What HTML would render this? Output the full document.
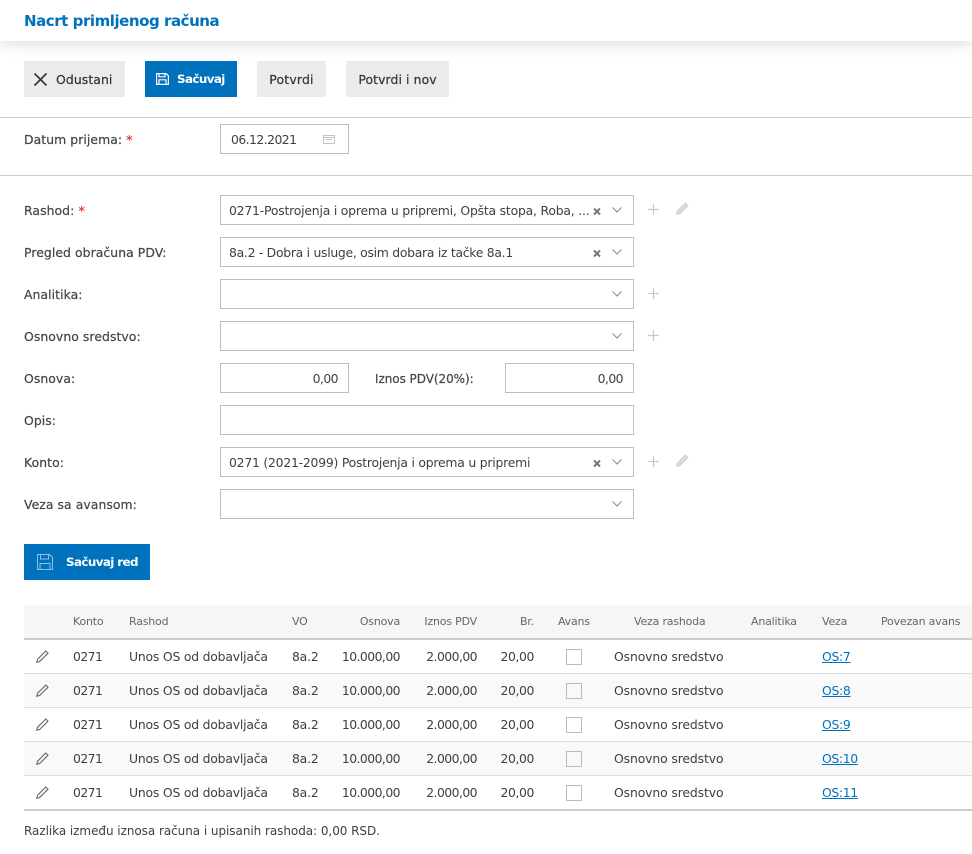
<!DOCTYPE html>
<html><head><meta charset="utf-8">
<style>
html,body{margin:0;padding:0;background:#fff}
body{position:relative;width:972px;height:854px;overflow:hidden;font-family:"DejaVu Sans","Liberation Sans",sans-serif;font-size:12.4px;color:#444}
.a{position:absolute}
.t{position:absolute;white-space:nowrap;line-height:18px;color:#3f3f3f;margin-top:1px}
.l{color:#444;letter-spacing:.07px;-webkit-text-stroke:.2px #444}
.h{font-size:11px;color:#666;margin-top:0;letter-spacing:-.2px}
.r{text-align:right}
.n{letter-spacing:-.55px}
.u{letter-spacing:-.2px}
.o{letter-spacing:-.12px}
.i{position:absolute;box-sizing:border-box;border:1px solid #bdbdbd;background:#fff;height:30px}
.b{position:absolute;height:36px;background:#ebebeb;line-height:37px;color:#333;text-align:center;font-size:12.4px;-webkit-text-stroke:.2px #333}
.p{background:#0071bc;color:#fff;font-weight:bold;font-size:11.9px;-webkit-text-stroke:0;letter-spacing:-.6px}
.s{color:#e8413c;font-weight:bold;-webkit-text-stroke:0}
svg{position:absolute;overflow:visible}
a{color:#0071bc}
</style></head><body>
<div class="a" style="left:0;top:0;width:972px;height:41px;background:#fff;box-shadow:0 4px 14px rgba(0,0,0,.12)"></div>
<div class="t" style="left:24px;top:11px;margin-top:0;font-size:15px;font-weight:bold;color:#0071bc;line-height:20px;letter-spacing:-.45px">Nacrt primljenog računa</div>

<div class="b" style="left:24px;top:61px;width:101px"><span class="a" style="left:32px;top:0;letter-spacing:.1px">Odustani</span></div>
<svg style="left:34px;top:73px" width="13" height="13" viewBox="0 0 13 13"><path d="M.5.500l12 12M12.500.500l-12 12" stroke="#333" stroke-width="1.600" fill="none"/></svg>
<div class="b p" style="left:145px;top:61px;width:92px"><span class="a" style="left:32px;top:0">Sačuvaj</span></div>
<svg style="left:156px;top:73px" width="13" height="12" viewBox="0 0 13 12"><path d="M.6.600h9.500l2.300 2.200v8.600H.6zM3 .8v3h6v-3M3 11V6.800h7V11" stroke="#fff" stroke-width="1.200" fill="none"/></svg>
<div class="b" style="left:257px;top:61px;width:69px;letter-spacing:.2px">Potvrdi</div>
<div class="b" style="left:346px;top:61px;width:103px;letter-spacing:.1px">Potvrdi i nov</div>

<div class="a" style="left:0;top:117px;width:972px;height:1px;background:#ccc"></div>
<div class="t l" style="left:24px;top:130px">Datum prijema: <span class="s">*</span></div>
<div class="i" style="left:220px;top:124px;width:129px"></div>
<div class="t n" style="left:231px;top:130px">06.12.2021</div>
<svg style="left:323px;top:134px" width="12" height="10" viewBox="0 0 12 10"><path d="M.5 1.500h11v8H.5zM.5 3.500h11M3 5.500h6" stroke="#c4c4c4" stroke-width="1" fill="none"/></svg>
<div class="a" style="left:0;top:175px;width:972px;height:1px;background:#ccc"></div>

<div class="t l" style="left:24px;top:201px">Rashod: <span class="s">*</span></div>
<div class="i" style="left:220px;top:195px;width:414px"></div>
<div class="t" style="left:229px;top:201px;width:362px;overflow:hidden;letter-spacing:-.2px">0271-Postrojenja i oprema u pripremi, Opšta stopa, Roba, ...</div>
<svg style="left:593px;top:207px" width="8" height="9" viewBox="0 0 8 9"><path d="M1 1.500l6 6M7 1.500l-6 6" stroke="#777" stroke-width="2" fill="none"/></svg>
<svg style="left:612px;top:207px" width="10" height="6" viewBox="0 0 10 6"><path d="M.5.500L5 5 9.500.500" stroke="#888" stroke-width="1" fill="none"/></svg>
<svg style="left:648px;top:204px" width="11" height="11" viewBox="0 0 11 11"><path d="M5.500 0v11M0 5.500h11" stroke="#c8c8c8" stroke-width="1.200" fill="none"/></svg>
<svg style="left:675px;top:201px" width="15" height="15" viewBox="0 0 15 15"><path d="M1.500 13.500l1-3.500 8-8 2.500 2.500-8 8z" stroke="#d0d0d0" stroke-width="1" fill="#dcdcdc"/></svg>

<div class="t l" style="left:24px;top:243px">Pregled obračuna PDV:</div>
<div class="i" style="left:220px;top:237px;width:414px"></div>
<div class="t" style="left:229px;top:243px;letter-spacing:-.28px">8a.2 - Dobra i usluge, osim dobara iz tačke 8a.1</div>
<svg style="left:593px;top:249px" width="8" height="9" viewBox="0 0 8 9"><path d="M1 1.500l6 6M7 1.500l-6 6" stroke="#777" stroke-width="2" fill="none"/></svg>
<svg style="left:612px;top:249px" width="10" height="6" viewBox="0 0 10 6"><path d="M.5.500L5 5 9.500.500" stroke="#888" stroke-width="1" fill="none"/></svg>

<div class="t l" style="left:24px;top:285px">Analitika:</div>
<div class="i" style="left:220px;top:279px;width:414px"></div>
<svg style="left:612px;top:291px" width="10" height="6" viewBox="0 0 10 6"><path d="M.5.500L5 5 9.500.500" stroke="#888" stroke-width="1" fill="none"/></svg>
<svg style="left:648px;top:288px" width="11" height="11" viewBox="0 0 11 11"><path d="M5.500 0v11M0 5.500h11" stroke="#c8c8c8" stroke-width="1.200" fill="none"/></svg>

<div class="t l" style="left:24px;top:327px">Osnovno sredstvo:</div>
<div class="i" style="left:220px;top:321px;width:414px"></div>
<svg style="left:612px;top:333px" width="10" height="6" viewBox="0 0 10 6"><path d="M.5.500L5 5 9.500.500" stroke="#888" stroke-width="1" fill="none"/></svg>
<svg style="left:648px;top:330px" width="11" height="11" viewBox="0 0 11 11"><path d="M5.500 0v11M0 5.500h11" stroke="#c8c8c8" stroke-width="1.200" fill="none"/></svg>

<div class="t l" style="left:24px;top:369px">Osnova:</div>
<div class="i" style="left:220px;top:363px;width:129px"></div>
<div class="t r n" style="left:220px;top:369px;width:118px">0,00</div>
<div class="t l" style="left:375px;top:369px;font-size:12px;letter-spacing:-.05px">Iznos PDV(20%):</div>
<div class="i" style="left:505px;top:363px;width:129px"></div>
<div class="t r n" style="left:505px;top:369px;width:118px">0,00</div>

<div class="t l" style="left:24px;top:411px">Opis:</div>
<div class="i" style="left:220px;top:405px;width:414px"></div>

<div class="t l" style="left:24px;top:453px">Konto:</div>
<div class="i" style="left:220px;top:447px;width:414px"></div>
<div class="t" style="left:229px;top:453px;letter-spacing:-.22px">0271 (2021-2099) Postrojenja i oprema u pripremi</div>
<svg style="left:593px;top:459px" width="8" height="9" viewBox="0 0 8 9"><path d="M1 1.500l6 6M7 1.500l-6 6" stroke="#777" stroke-width="2" fill="none"/></svg>
<svg style="left:612px;top:459px" width="10" height="6" viewBox="0 0 10 6"><path d="M.5.500L5 5 9.500.500" stroke="#888" stroke-width="1" fill="none"/></svg>
<svg style="left:648px;top:456px" width="11" height="11" viewBox="0 0 11 11"><path d="M5.500 0v11M0 5.500h11" stroke="#c8c8c8" stroke-width="1.200" fill="none"/></svg>
<svg style="left:675px;top:453px" width="15" height="15" viewBox="0 0 15 15"><path d="M1.500 13.500l1-3.500 8-8 2.500 2.500-8 8z" stroke="#d0d0d0" stroke-width="1" fill="#dcdcdc"/></svg>

<div class="t l" style="left:24px;top:495px">Veza sa avansom:</div>
<div class="i" style="left:220px;top:489px;width:414px"></div>
<svg style="left:612px;top:501px" width="10" height="6" viewBox="0 0 10 6"><path d="M.5.500L5 5 9.500.500" stroke="#888" stroke-width="1" fill="none"/></svg>

<div class="b p" style="left:24px;top:544px;width:126px"><span class="a" style="left:42px;top:0">Sačuvaj red</span></div>
<svg style="left:37px;top:554px" width="16" height="16" viewBox="0 0 16 16"><path d="M.5.500h12l3 3v12H.5zM3.500.7v4.300h8V.7M3 15.300V9.500h10v5.800" stroke="#8fc1e3" stroke-width="1" fill="none"/></svg>

<div class="a" style="left:24px;top:605px;width:948px;height:33px;background:#f6f6f6"></div>
<div class="a" style="left:24px;top:638px;width:948px;height:2px;background:#ccc"></div>
<div class="a" style="left:24px;top:673px;width:948px;height:1px;background:#ddd"></div>
<div class="a" style="left:24px;top:674px;width:948px;height:33px;background:#f9f9f9"></div>
<div class="a" style="left:24px;top:707px;width:948px;height:1px;background:#ddd"></div>
<div class="a" style="left:24px;top:741px;width:948px;height:1px;background:#ddd"></div>
<div class="a" style="left:24px;top:742px;width:948px;height:33px;background:#f9f9f9"></div>
<div class="a" style="left:24px;top:775px;width:948px;height:1px;background:#ddd"></div>
<div class="a" style="left:24px;top:809px;width:948px;height:2px;background:#ccc"></div>

<div class="t h" style="left:73px;top:613px">Konto</div>
<div class="t h" style="left:129px;top:613px">Rashod</div>
<div class="t h" style="left:292px;top:613px">VO</div>
<div class="t h r" style="left:340px;top:613px;width:60px">Osnova</div>
<div class="t h r" style="left:410px;top:613px;width:67px">Iznos PDV</div>
<div class="t h r" style="left:494px;top:613px;width:40px">Br.</div>
<div class="t h" style="left:558px;top:613px">Avans</div>
<div class="t h" style="left:634px;top:613px">Veza rashoda</div>
<div class="t h" style="left:751px;top:613px">Analitika</div>
<div class="t h" style="left:822px;top:613px">Veza</div>
<div class="t h" style="left:881px;top:613px">Povezan avans</div>

<svg style="left:36px;top:650px" width="13" height="13" viewBox="0 0 13 13"><path d="M.8 12.200l.8-3L9.800 1l2.200 2.200-8.200 8.200z" stroke="#666" stroke-width="1.100" fill="none"/></svg>
<div class="t n" style="left:73px;top:647px">0271</div>
<div class="t u" style="left:129px;top:647px">Unos OS od dobavljača</div>
<div class="t n" style="left:292px;top:647px;letter-spacing:-.2px">8a.2</div>
<div class="t r n" style="left:320px;top:647px;width:80px">10.000,00</div>
<div class="t r n" style="left:410px;top:647px;width:67px">2.000,00</div>
<div class="t r n" style="left:494px;top:647px;width:40px;letter-spacing:-.4px">20,00</div>
<div class="a" style="left:566px;top:649px;width:14px;height:14px;border:1px solid #bbb;background:#fff"></div>
<div class="t o" style="left:614px;top:647px">Osnovno sredstvo</div>
<div class="t" style="left:822px;top:647px;letter-spacing:-.3px"><a href="#">OS:7</a></div>

<svg style="left:36px;top:684px" width="13" height="13" viewBox="0 0 13 13"><path d="M.8 12.200l.8-3L9.800 1l2.200 2.200-8.200 8.200z" stroke="#666" stroke-width="1.100" fill="none"/></svg>
<div class="t n" style="left:73px;top:681px">0271</div>
<div class="t u" style="left:129px;top:681px">Unos OS od dobavljača</div>
<div class="t n" style="left:292px;top:681px;letter-spacing:-.2px">8a.2</div>
<div class="t r n" style="left:320px;top:681px;width:80px">10.000,00</div>
<div class="t r n" style="left:410px;top:681px;width:67px">2.000,00</div>
<div class="t r n" style="left:494px;top:681px;width:40px;letter-spacing:-.4px">20,00</div>
<div class="a" style="left:566px;top:683px;width:14px;height:14px;border:1px solid #bbb;background:#f9f9f9"></div>
<div class="t o" style="left:614px;top:681px">Osnovno sredstvo</div>
<div class="t" style="left:822px;top:681px;letter-spacing:-.3px"><a href="#">OS:8</a></div>

<svg style="left:36px;top:718px" width="13" height="13" viewBox="0 0 13 13"><path d="M.8 12.200l.8-3L9.800 1l2.200 2.200-8.200 8.200z" stroke="#666" stroke-width="1.100" fill="none"/></svg>
<div class="t n" style="left:73px;top:715px">0271</div>
<div class="t u" style="left:129px;top:715px">Unos OS od dobavljača</div>
<div class="t n" style="left:292px;top:715px;letter-spacing:-.2px">8a.2</div>
<div class="t r n" style="left:320px;top:715px;width:80px">10.000,00</div>
<div class="t r n" style="left:410px;top:715px;width:67px">2.000,00</div>
<div class="t r n" style="left:494px;top:715px;width:40px;letter-spacing:-.4px">20,00</div>
<div class="a" style="left:566px;top:717px;width:14px;height:14px;border:1px solid #bbb;background:#fff"></div>
<div class="t o" style="left:614px;top:715px">Osnovno sredstvo</div>
<div class="t" style="left:822px;top:715px;letter-spacing:-.3px"><a href="#">OS:9</a></div>

<svg style="left:36px;top:752px" width="13" height="13" viewBox="0 0 13 13"><path d="M.8 12.200l.8-3L9.800 1l2.200 2.200-8.200 8.200z" stroke="#666" stroke-width="1.100" fill="none"/></svg>
<div class="t n" style="left:73px;top:749px">0271</div>
<div class="t u" style="left:129px;top:749px">Unos OS od dobavljača</div>
<div class="t n" style="left:292px;top:749px;letter-spacing:-.2px">8a.2</div>
<div class="t r n" style="left:320px;top:749px;width:80px">10.000,00</div>
<div class="t r n" style="left:410px;top:749px;width:67px">2.000,00</div>
<div class="t r n" style="left:494px;top:749px;width:40px;letter-spacing:-.4px">20,00</div>
<div class="a" style="left:566px;top:751px;width:14px;height:14px;border:1px solid #bbb;background:#f9f9f9"></div>
<div class="t o" style="left:614px;top:749px">Osnovno sredstvo</div>
<div class="t" style="left:822px;top:749px;letter-spacing:-.35px"><a href="#">OS:10</a></div>

<svg style="left:36px;top:786px" width="13" height="13" viewBox="0 0 13 13"><path d="M.8 12.200l.8-3L9.800 1l2.200 2.200-8.200 8.200z" stroke="#666" stroke-width="1.100" fill="none"/></svg>
<div class="t n" style="left:73px;top:783px">0271</div>
<div class="t u" style="left:129px;top:783px">Unos OS od dobavljača</div>
<div class="t n" style="left:292px;top:783px;letter-spacing:-.2px">8a.2</div>
<div class="t r n" style="left:320px;top:783px;width:80px">10.000,00</div>
<div class="t r n" style="left:410px;top:783px;width:67px">2.000,00</div>
<div class="t r n" style="left:494px;top:783px;width:40px;letter-spacing:-.4px">20,00</div>
<div class="a" style="left:566px;top:785px;width:14px;height:14px;border:1px solid #bbb;background:#fff"></div>
<div class="t o" style="left:614px;top:783px">Osnovno sredstvo</div>
<div class="t" style="left:822px;top:783px;letter-spacing:-.35px"><a href="#">OS:11</a></div>

<div class="t" style="left:24px;top:821px;font-size:12px;letter-spacing:-.05px">Razlika između iznosa računa i upisanih rashoda: 0,00 RSD.</div>
</body></html>
